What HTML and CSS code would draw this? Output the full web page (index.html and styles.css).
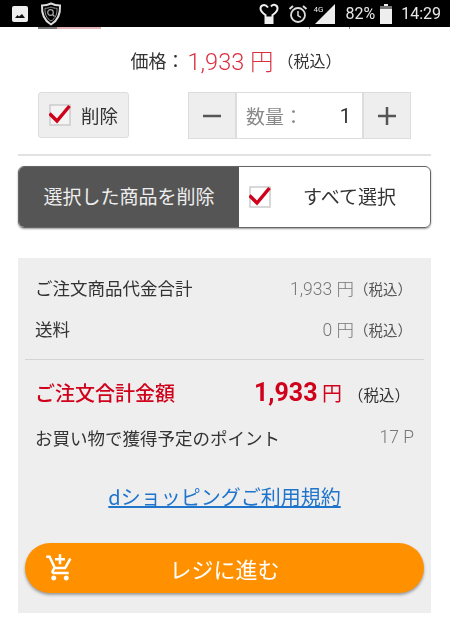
FILE: index.html
```html
<!DOCTYPE html>
<html lang="ja">
<head>
    <meta charset="UTF-8">
    <meta name="viewport" content="width=device-width, initial-scale=1.0">
    <title>カート</title>
    <link rel="stylesheet" href="styles.css">
</head>
<body>
    <div class="statusbar">
        <div class="status-left">
            <svg class="ic-image" width="16" height="16" viewBox="0 0 16 16"><rect width="16" height="16" rx="2" fill="#eee"/><path d="M3 12l2.500-3 1.500 1.500L10 8l3 4z" fill="#111"/></svg>
            <svg class="ic-shield" width="22" height="24" viewBox="0 0 22 24"><path d="M11 1.500C14 3 17 3.500 20 3.500 20.500 12 18 18.500 11 22.500 4 18.500 1.500 12 2 3.500 5 3.500 8 3 11 1.500z" fill="none" stroke="#ddd" stroke-width="2"/><path d="M11 5c2 1 4 1.300 6 1.300C17.300 12 15.500 16.500 11 19 6.500 16.500 4.700 12 5 6.300 7 6.300 9 6 11 5z" fill="none" stroke="#999" stroke-width="1"/><circle cx="10.500" cy="10.500" r="2.800" fill="none" stroke="#aaa" stroke-width="1.200"/><path d="M12.500 12.500l2 2" stroke="#aaa" stroke-width="1.200"/></svg>
        </div>
        <div class="status-right">
            <svg class="ic-heart" width="20" height="24" viewBox="0 0 20 24"><path d="M9 5.500C6 1.500 1.500 3 1.500 6.500c0 3 3 5 5 6.500v8h7v-8c2-1.500 5-3.500 5-6.500 0-3.500-4-5-6.500-2" fill="none" stroke="#eee" stroke-width="2"/><path d="M6.500 14.500h7v6.500h-7z" fill="#eee"/></svg>
            <svg class="ic-alarm" width="20" height="20" viewBox="0 0 20 20"><circle cx="10" cy="11" r="7" fill="none" stroke="#ddd" stroke-width="1.800"/><path d="M10 7v4.500l3 2" fill="none" stroke="#ddd" stroke-width="1.500"/><path d="M1.500 5L5 2M18.500 5L15 2" stroke="#ddd" stroke-width="2"/></svg>
            <span class="net">4G</span>
            <svg class="ic-signal" width="20" height="20" viewBox="0 0 20 20"><path d="M20 0v20H0z" fill="#eee"/></svg>
            <span class="pct">82%</span>
            <svg class="ic-batt" width="12" height="20" viewBox="0 0 12 20"><path d="M4 0h4v2h4v18H0V2h4z" fill="#eee"/><path d="M0 2h12v3H0z" fill="#777"/></svg>
            <span class="clock">14:29</span>
        </div>
    </div>

    <!-- bottom edge of the row scrolled under the status bar -->
    <div class="cut-strip">
        <span class="cut-dark"></span>
        <span class="cut-red"></span>
        <span class="cut-tick"></span>
        <span class="cut-tick"></span>
    </div>

    <div class="price-row">
        <span class="price-label">価格：</span><span class="price-val">1,933 円</span><span class="price-tax">（税込）</span>
    </div>

    <div class="qty-row">
        <div class="del-box">
            <svg class="check" width="22" height="22" viewBox="0 0 22 22"><rect x="1" y="1" width="20" height="20" fill="#f4f4f4" stroke="#ccc" stroke-width="1.500"/><path d="M0.500 9.500L8 17 20.500 2" fill="none" stroke="#d0021b" stroke-width="3.500"/></svg>
            <span>削除</span>
        </div>
        <div class="qty-box">
            <div class="qty-btn"><svg width="20" height="20" viewBox="0 0 20 20"><path d="M1 10h18" stroke="#555" stroke-width="2.500"/></svg></div>
            <div class="qty-mid"><span class="qty-label">数量：</span><span class="qty-num">1</span></div>
            <div class="qty-btn"><svg width="20" height="20" viewBox="0 0 20 20"><path d="M1 10h18M10 1v18" stroke="#555" stroke-width="2.500"/></svg></div>
        </div>
    </div>

    <hr class="rule">

    <div class="select-bar">
        <div class="select-del">選択した商品を削除</div>
        <div class="select-all">
            <svg class="check" width="22" height="22" viewBox="0 0 22 22"><rect x="1" y="1" width="20" height="20" fill="#fff" stroke="#ccc" stroke-width="1.500"/><path d="M0.500 9.500L8 17 20.500 2" fill="none" stroke="#d0021b" stroke-width="3.500"/></svg>
            <span class="select-all-text">すべて選択</span>
        </div>
    </div>

    <div class="summary">
        <div class="line">
            <span>ご注文商品代金合計</span>
            <span class="line-val">1,933 円<small>（税込）</small></span>
        </div>
        <div class="line">
            <span>送料</span>
            <span class="line-val">0 円<small>（税込）</small></span>
        </div>
        <hr class="sum-rule">
        <div class="total">
            <span class="total-label">ご注文合計金額</span>
            <span class="total-val"><b>1,933</b> 円<small>（税込）</small></span>
        </div>
        <div class="points">
            <span>お買い物で獲得予定のポイント</span>
            <span class="line-val">17 P</span>
        </div>
        <a class="terms" href="#">dショッピングご利用規約</a>
        <div class="checkout">
            <svg class="ic-cart" width="30" height="30" viewBox="0 0 24 24"><path d="M11 9h2V6h3V4h-3V1h-2v3H8v2h3v3zm-4 9c-1.100 0-1.990.900-1.990 2S5.900 22 7 22s2-.900 2-2-.900-2-2-2zm10 0c-1.100 0-1.990.900-1.990 2s.890 2 1.990 2 2-.900 2-2-.900-2-2-2zm-9.830-3.250l.030-.120.900-1.630h7.450c.750 0 1.410-.410 1.750-1.030l3.860-7.010L19.420 4h-.010l-1.100 2-2.760 5H8.530l-.130-.270L6.160 6l-.950-2-.940-2H1v2h2l3.600 7.590-1.350 2.450c-.160.280-.250.610-.250.960 0 1.100.900 2 2 2h12v-2H7.420c-.130 0-.250-.110-.250-.250z" fill="#fff"/></svg>
            <span>レジに進む</span>
        </div>
    </div>
</body>
</html>
```

FILE: styles.css
```css
body {
    margin: 0;
    width: 450px;
    height: 622px;
    overflow: hidden;
    background: #fff;
    color: #333;
    font-family: "Noto Sans CJK JP", "Liberation Sans", sans-serif;
    filter: blur(0.4px);
}
.statusbar {
    height: 27px;
    background: #000;
    color: #e8e8e8;
    display: flex;
    justify-content: space-between;
    align-items: center;
    padding: 0 9px 0 12px;
}
.status-left, .status-right {
    display: flex;
    align-items: center;
}
.ic-image {
    margin-right: 12px;
}
.status-right {
    font-family: Roboto, sans-serif;
    font-size: 16px;
}
.ic-alarm {
    margin-left: 9px;
}
.net {
    font-size: 8px;
    margin: -8px -8px 0 6px;
}
.pct {
    margin: 0 5px 0 10px;
}
.clock {
    margin-left: 9px;
}
.cut-strip {
    height: 2px;
    display: flex;
    padding-left: 38px;
}
.cut-dark {
    width: 19px;
    background: #777;
}
.cut-red {
    width: 44px;
    background: #e3b4ba;
}
.cut-tick {
    width: 1px;
    background: #888;
    margin-left: 39px;
}
.cut-tick:nth-child(3) {
    margin-left: 208px;
}
.price-row {
    margin-top: 14px;
    height: 34px;
    display: flex;
    justify-content: center;
    align-items: center;
    padding-left: 22px;
}
.price-label {
    font-size: 18px;
    margin-right: 3px;
}
.price-val {
    color: #d9303f;
    font-size: 23.500px;
    font-family: Roboto, "Noto Sans CJK JP", sans-serif;
    font-weight: 300;
}
.price-tax {
    font-size: 16px;
    margin-left: 4px;
}
.qty-row {
    display: flex;
    justify-content: space-between;
    margin: 15px 39px 0 38px;
}
.del-box {
    width: 91px;
    height: 46px;
    box-sizing: border-box;
    background: #eee;
    border: 1px solid #ddd;
    border-radius: 3px;
    display: flex;
    align-items: center;
    gap: 10px;
    padding-left: 10px;
    font-size: 18.500px;
}
.qty-box {
    width: 223px;
    height: 47px;
    box-sizing: border-box;
    border: 1px solid #ddd;
    display: flex;
}
.qty-btn {
    width: 46px;
    background: #eee;
    display: flex;
    align-items: center;
    justify-content: center;
}
.qty-mid {
    flex: 1;
    border-left: 2px solid #ddd;
    border-right: 2px solid #ddd;
    display: flex;
    justify-content: space-between;
    align-items: center;
    padding: 0 11px 0 9px;
}
.qty-label {
    color: #888;
    font-size: 19px;
}
.qty-num {
    font-family: Roboto, sans-serif;
    font-size: 20px;
}
.rule {
    height: 2px;
    border: 0;
    background: #e2e2e2;
    margin: 15px 19px 0 18px;
}
.select-bar {
    margin: 10px 19px 0 18px;
    height: 62px;
    box-sizing: border-box;
    border: 1px solid #666;
    border-radius: 6px;
    box-shadow: 0 1px 2px rgba(0, 0, 0, 0.4);
    display: flex;
    overflow: hidden;
}
.select-del {
    width: 220px;
    background: #555;
    color: #eee;
    display: flex;
    align-items: center;
    justify-content: center;
    font-size: 19px;
    padding-bottom: 3px;
    box-sizing: border-box;
}
.select-all {
    flex: 1;
    display: flex;
    align-items: center;
    padding-left: 10px;
    font-size: 19px;
}
.select-all-text {
    margin: 0 0 3px 32px;
}
.summary {
    margin: 30px 19px 0 18px;
    height: 355px;
    background: #eee;
    padding: 0 7px;
    box-sizing: border-box;
    overflow: hidden;
}
.line, .total, .points {
    display: flex;
    justify-content: space-between;
    align-items: center;
    padding: 0 14px 0 10px;
    font-size: 17.500px;
}
.line {
    height: 41px;
    padding-right: 12px;
}
.line:first-child {
    margin-top: 9px;
}
.line-val {
    color: #777;
    font-family: Roboto, "Noto Sans CJK JP", sans-serif;
    font-weight: 300;
    font-size: 17.500px;
}
.line-val small, .total-val small {
    font-size: 14.500px;
    color: #555;
    font-family: "Noto Sans CJK JP", sans-serif;
    font-weight: 400;
}
.sum-rule {
    height: 1px;
    border: 0;
    background: #d4d4d4;
    margin: 10px 0 0;
}
.total {
    height: 64px;
}
.total-label {
    color: #d0021b;
    font-size: 20px;
    font-weight: 500;
}
.total-val {
    color: #d0021b;
    font-size: 20px;
}
.total-val b {
    font-family: Roboto, sans-serif;
    font-size: 25px;
}
.total-val small {
    color: #333;
    font-size: 15.500px;
    margin-left: 6px;
}
.points {
    height: 26px;
    padding-right: 10px;
}
.terms {
    display: block;
    text-align: center;
    margin-top: 32px;
    color: #1f74cc;
    font-size: 20px;
    text-decoration: underline;
}
.checkout {
    margin-top: 32px;
    height: 50px;
    border-radius: 25px;
    background: #ff9100;
    color: #fff;
    font-size: 22px;
    box-shadow: 0 2px 3px rgba(0, 0, 0, 0.35);
    display: flex;
    align-items: center;
    justify-content: center;
    position: relative;
}
.ic-cart {
    position: absolute;
    left: 20px;
    top: 10px;
}
```
